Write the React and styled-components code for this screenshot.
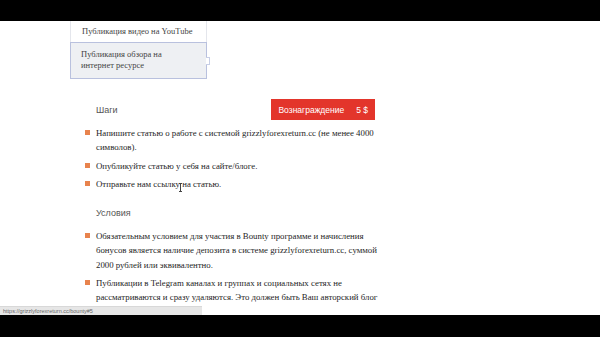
import React from 'react'
import styled, { createGlobalStyle } from 'styled-components'

const Global = createGlobalStyle`
  html, body { margin: 0; padding: 0; background: #000; }
  body { width: 600px; height: 337px; overflow: hidden; }
`

const steps = [
  'Напишите статью о работе с системой grizzlyforexreturn.cc (не менее 4000 символов).',
  'Опубликуйте статью у себя на сайте/блоге.',
  'Отправьте нам ссылку на статью.',
]

const terms = [
  'Обязательным условием для участия в Bounty программе и начисления бонусов является наличие депозита в системе grizzlyforexreturn.cc, суммой 2000 рублей или эквивалентно.',
  'Публикации в Telegram каналах и группах и социальных сетях не рассматриваются и сразу удаляются. Это должен быть Ваш авторский блог или сайт.',
]

function App() {
  return (
    <>
      <Global />
      <TopBar />
      <Page>
        <Dropdown>
          <Option>Публикация видео на YouTube</Option>
          <Option active>Публикация обзора на<br />интернет ресурсе</Option>
        </Dropdown>

        <Section first>
          <HeadRow>
            <Title>Шаги</Title>
            <Reward>
              <span>Вознаграждение</span>
              <span>5 $</span>
            </Reward>
          </HeadRow>
          <List>
            {steps.map((s) => <Item key={s}>{s}</Item>)}
          </List>
          <Cursor />
        </Section>

        <Section>
          <HeadRow>
            <Title>Условия</Title>
          </HeadRow>
          <List>
            {terms.map((s) => <Item key={s}>{s}</Item>)}
          </List>
        </Section>

        <StatusBar>https://grizzlyforexreturn.cc/bounty#5</StatusBar>
      </Page>
    </>
  )
}

export default App

const TopBar = styled.div`
  height: 21px;
  background: #000;
`

const Page = styled.div`
  position: relative;
  height: 294px;
  overflow: hidden;
  background: #fff;
`

const Dropdown = styled.div`
  width: 135px;
  margin-left: 70px;
  background: #fff;
  border: 1px solid #e4e6ec;
  border-top: none;
  font-family: "Liberation Serif", serif;
  font-size: 8.5px;
  color: #444;
`

const Option = styled.div`
  position: relative;
  white-space: nowrap;
  padding: ${p => p.active ? '6px 10px 7px' : '4px 10px 4px'};
  line-height: 11px;
  background: ${p => p.active ? '#eef0f3' : '#fff'};
  border: 1px solid ${p => p.active ? '#b9c1de' : 'transparent'};
  margin: ${p => p.active ? '0 -1px -1px' : '0'};

  ${p => p.active && `
    &::after {
      content: '';
      position: absolute;
      right: -4px;
      top: 14px;
      width: 3px;
      height: 6px;
      border: 1px solid #c8cfe6;
      border-left: none;
      background: #fff;
    }
  `}
`

const Section = styled.div`
  position: relative;
  width: 298px;
  margin-left: 85px;
  margin-top: ${p => p.first ? '20px' : '11px'};
`

const HeadRow = styled.div`
  display: flex;
  justify-content: space-between;
  align-items: center;
  width: 279px;
  margin-left: 11px;
  min-height: 21px;
`

const Title = styled.div`
  font-family: "Liberation Sans", Arial, sans-serif;
  font-size: 9px;
  color: #555;
`

const Reward = styled.div`
  display: flex;
  gap: 12px;
  align-items: center;
  height: 21px;
  padding: 0 7px;
  background: #e3352b;
  color: #fff;
  font-family: "Liberation Sans", Arial, sans-serif;
  font-size: 8.5px;
`

const List = styled.ul`
  list-style: none;
  margin: 6px 0 0;
  padding: 0;
  font-family: "Liberation Serif", serif;
  font-size: 8.8px;
  line-height: 14.3px;
  color: #262626;
`

const Item = styled.li`
  position: relative;
  padding-left: 11px;
  margin-bottom: 4px;

  &::before {
    content: '';
    position: absolute;
    left: 0;
    top: 4px;
    width: 5px;
    height: 5px;
    background: #e8834d;
  }
`

const Cursor = styled.div`
  position: absolute;
  left: 95px;
  top: 84px;
  width: 1px;
  height: 9px;
  background: #444;

  &::before, &::after {
    content: '';
    position: absolute;
    left: -1px;
    width: 3px;
    height: 1px;
    background: #444;
  }
  &::before { top: 0; }
  &::after { bottom: 0; }
`

const StatusBar = styled.div`
  position: absolute;
  left: 0;
  bottom: 0;
  width: 199px;
  height: 8px;
  padding-left: 3px;
  background: #e6e6e6;
  border-top: 1px solid #d8d8d8;
  font-family: "Liberation Sans", Arial, sans-serif;
  font-size: 5.5px;
  line-height: 8px;
  color: #666;
`
